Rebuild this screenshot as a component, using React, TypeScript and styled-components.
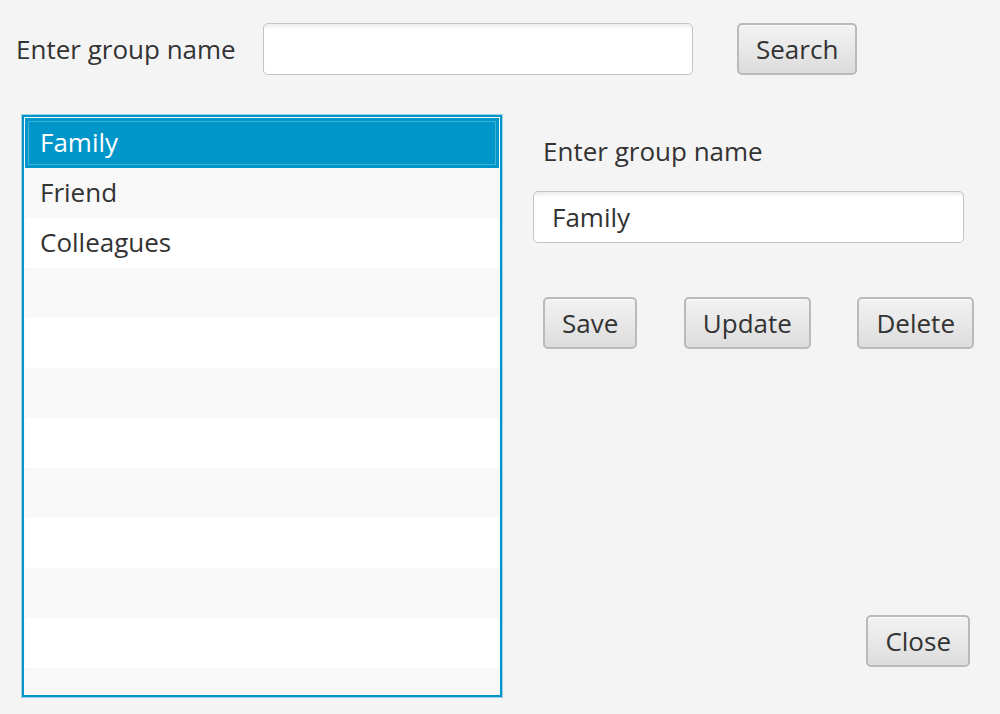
import React, { FC, useState } from 'react';
import styled, { createGlobalStyle } from 'styled-components';

const GlobalStyle = createGlobalStyle`
  html, body {
    margin: 0;
    padding: 0;
    background: #f4f4f4;
  }
  * {
    box-sizing: border-box;
  }
`;

const groups = ['Family', 'Friend', 'Colleagues'];
const ROW_COUNT = 12;

const App: FC = () => {
  const [selected, setSelected] = useState(0);
  const [search, setSearch] = useState('');
  const [name, setName] = useState(groups[0]);

  const rows = Array.from({ length: ROW_COUNT }, (_, i) => groups[i] ?? '');

  const pick = (i: number): void => {
    if (!groups[i]) return;
    setSelected(i);
    setName(groups[i]);
  };

  return (
    <Window>
      <GlobalStyle />
      <TopBar>
        <Label>Enter group name</Label>
        <TextField
          width={430}
          value={search}
          onChange={(e) => setSearch(e.target.value)}
        />
        <Button>Search</Button>
      </TopBar>
      <Body>
        <ListView>
          {rows.map((g, i) => (
            <Cell
              key={i}
              $odd={i % 2 === 1}
              $selected={i === selected}
              onClick={() => pick(i)}
            >
              {g}
            </Cell>
          ))}
        </ListView>
        <Editor>
          <EditorLabel>Enter group name</EditorLabel>
          <TextField
            width={431}
            value={name}
            onChange={(e) => setName(e.target.value)}
          />
          <Actions>
            <Button>Save</Button>
            <Button>Update</Button>
            <Button>Delete</Button>
          </Actions>
          <CloseButton>Close</CloseButton>
        </Editor>
      </Body>
    </Window>
  );
};

const Window = styled.div`
  width: 1000px;
  height: 714px;
  overflow: hidden;
  background: #f4f4f4;
  font-family: 'Open Sans', 'Liberation Sans', sans-serif;
  font-size: 26px;
  color: #333333;
  display: flex;
  flex-direction: column;
`;

const TopBar = styled.div`
  display: flex;
  align-items: center;
  padding: 23px 0 0 16px;
  height: 75px;
`;

const Label = styled.span`
  width: 247px;
  line-height: 34px;
  white-space: nowrap;
`;

const TextField = styled.input<{ width: number }>`
  width: ${(p) => p.width}px;
  height: 52px;
  padding: 0 18px;
  border: 1px solid #c4c4c4;
  border-radius: 5px;
  background: linear-gradient(to bottom, #ececec 0px, #ffffff 6px, #ffffff 100%);
  font: inherit;
  color: #333333;
  outline: none;
`;

const Button = styled.button`
  height: 52px;
  padding: 0 17px;
  margin-left: 44px;
  border: 2px solid #bababa;
  border-radius: 5px;
  background: linear-gradient(to bottom, #f2f2f2 0%, #e8e8e8 50%, #dcdcdc 100%);
  box-shadow: inset 0 1px 0 #fafafa;
  font: inherit;
  color: #333333;
  cursor: pointer;
`;

const Body = styled.div`
  flex: 1;
  display: flex;
  padding: 40px 0 17px 22px;
`;

const ListView = styled.div`
  width: 480px;
  height: 582px;
  border: 2px solid #0096c9;
  padding: 1px;
  background: #f9f9f9;
  box-shadow: 0 0 0 1px rgba(0, 150, 201, 0.35);
  overflow: hidden;
`;

const Cell = styled.div<{ $odd: boolean; $selected: boolean }>`
  height: 50px;
  line-height: 49px;
  padding-left: 15px;
  background: ${(p) => (p.$selected ? '#0096c9' : p.$odd ? '#f8f8f8' : '#ffffff')};
  color: ${(p) => (p.$selected ? '#ffffff' : '#333333')};
  outline: ${(p) => (p.$selected ? '1px solid #3fb0d8' : 'none')};
  outline-offset: -4px;
  cursor: default;
`;

const Editor = styled.div`
  width: 441px;
  margin-left: 31px;
  display: flex;
  flex-direction: column;
  align-items: flex-start;
  padding-top: 19px;
`;

const EditorLabel = styled.span`
  margin-left: 10px;
  line-height: 34px;
  margin-bottom: 23px;
`;

const Actions = styled.div`
  width: 100%;
  display: flex;
  justify-content: space-between;
  padding-left: 10px;
  margin-top: 54px;

  ${Button} {
    margin-left: 0;
  }
`;

const CloseButton = styled(Button)`
  margin-top: auto;
  margin-bottom: 30px;
  margin-right: 4px;
  align-self: flex-end;
`;

export default App;
